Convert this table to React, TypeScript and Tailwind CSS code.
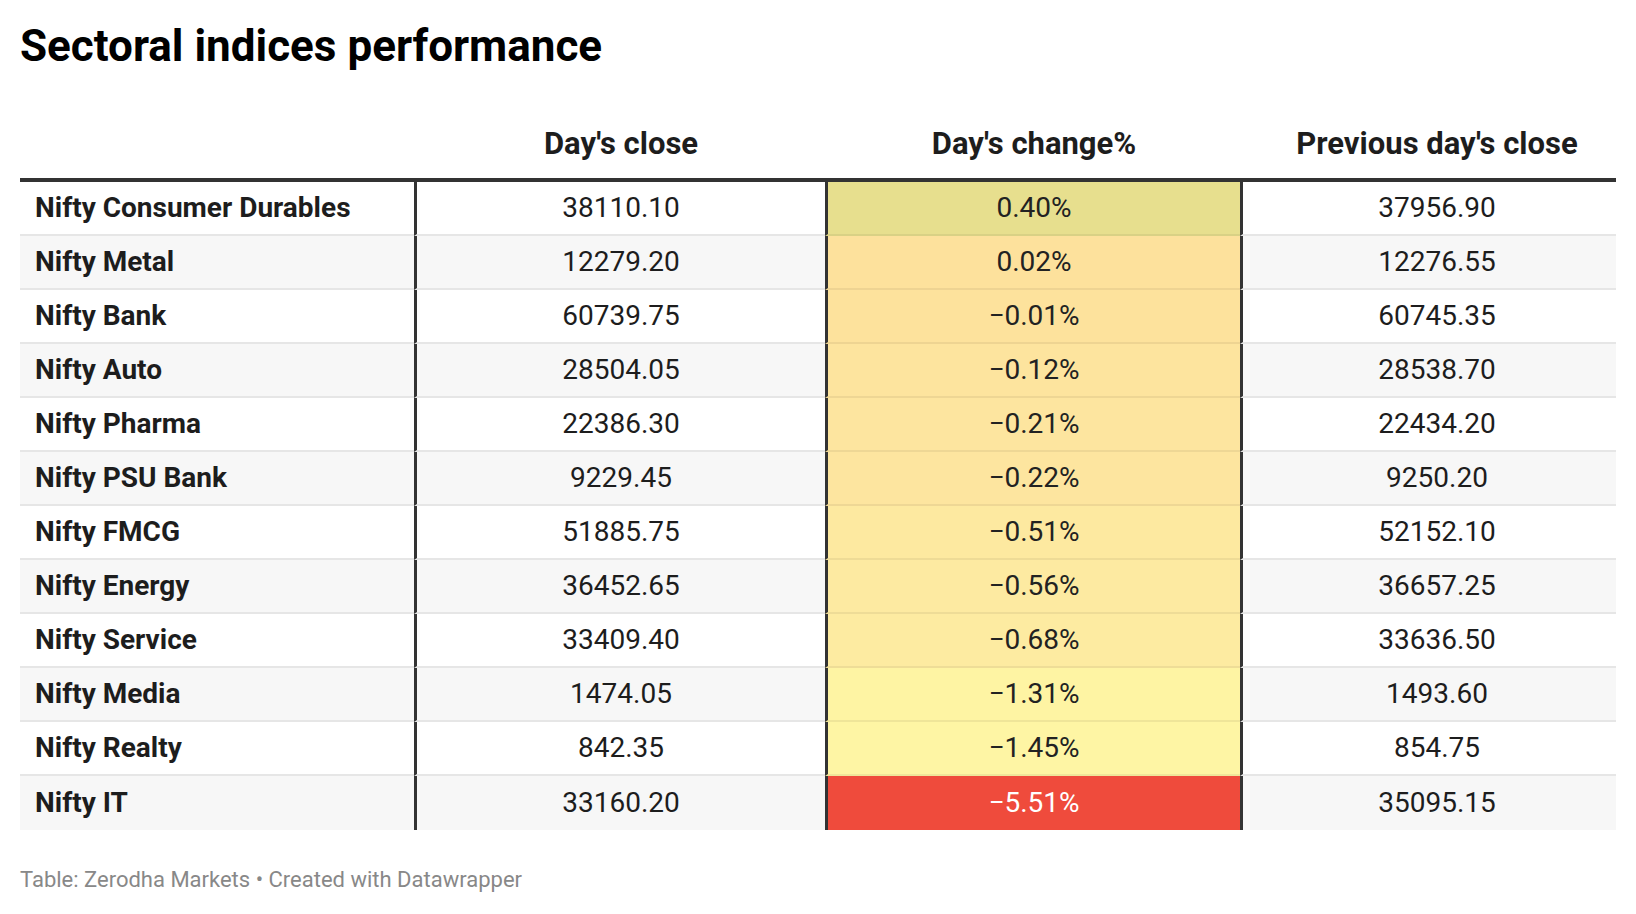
import React from 'react';

type Row = { name: string; close: string; change: string; prev: string; bg: string; light?: boolean };

const rows: Row[] = [
  { name: 'Nifty Consumer Durables', close: '38110.10', change: '0.40%', prev: '37956.90', bg: 'bg-[#e7df8e]' },
  { name: 'Nifty Metal', close: '12279.20', change: '0.02%', prev: '12276.55', bg: 'bg-[#fde19c]' },
  { name: 'Nifty Bank', close: '60739.75', change: '−0.01%', prev: '60745.35', bg: 'bg-[#fde29c]' },
  { name: 'Nifty Auto', close: '28504.05', change: '−0.12%', prev: '28538.70', bg: 'bg-[#fde49e]' },
  { name: 'Nifty Pharma', close: '22386.30', change: '−0.21%', prev: '22434.20', bg: 'bg-[#fde59f]' },
  { name: 'Nifty PSU Bank', close: '9229.45', change: '−0.22%', prev: '9250.20', bg: 'bg-[#fde59f]' },
  { name: 'Nifty FMCG', close: '51885.75', change: '−0.51%', prev: '52152.10', bg: 'bg-[#fde9a0]' },
  { name: 'Nifty Energy', close: '36452.65', change: '−0.56%', prev: '36657.25', bg: 'bg-[#fdeaa1]' },
  { name: 'Nifty Service', close: '33409.40', change: '−0.68%', prev: '33636.50', bg: 'bg-[#fdeba1]' },
  { name: 'Nifty Media', close: '1474.05', change: '−1.31%', prev: '1493.60', bg: 'bg-[#fef4a3]' },
  { name: 'Nifty Realty', close: '842.35', change: '−1.45%', prev: '854.75', bg: 'bg-[#fef5a4]' },
  { name: 'Nifty IT', close: '33160.20', change: '−5.51%', prev: '35095.15', bg: 'bg-[#ef4b3c]', light: true },
];

export default function App() {
  return (
    <div className="h-[914px] w-[1636px] bg-white px-[20px] font-['Roboto',sans-serif] text-[#1d1d1d]">
      <h1 className="pt-[20px] text-[44px] font-bold leading-[52px] text-black">Sectoral indices performance</h1>

      <div className="mt-[54px] flex border-b-4 border-[#333] pb-[16px] text-[31px] font-bold leading-[36px] text-[#1d1d1d]">
        <div className="w-[394px]" />
        <div className="w-[411px] pl-[3px] text-center">Day's close</div>
        <div className="w-[415px] pl-[3px] text-center">Day's change%</div>
        <div className="w-[376px] pl-[18px] text-center">Previous day's close</div>
      </div>

      <div className="flex flex-col">
        {rows.map((r, i) => {
          const last = i === rows.length - 1;
          const stripe = i % 2 === 1 ? 'bg-[#f7f7f7]' : 'bg-white';
          const sep = last ? '' : 'border-b-2';
          return (
            <div key={r.name} className={`flex h-[54px] text-[28px] leading-[32px] ${stripe}`}>
              <div className={`flex w-[394px] items-center pl-[15px] font-bold ${sep} border-[#e6e6e6]`}>{r.name}</div>
              <div className={`flex w-[411px] items-center justify-center border-l-[3px] border-l-[#333] ${sep} border-b-[#e6e6e6]`}>
                {r.close}
              </div>
              <div
                className={`flex w-[415px] items-center justify-center border-l-[3px] border-l-[#333] ${sep} border-b-black/[0.06] ${r.bg} ${r.light ? 'text-white' : 'text-[#222]'}`}
              >
                {r.change}
              </div>
              <div className={`flex w-[376px] items-center justify-center border-l-[3px] border-l-[#333] pl-[15px] ${sep} border-b-[#e6e6e6]`}>
                {r.prev}
              </div>
            </div>
          );
        })}
      </div>

      <p className="mt-[37px] text-[22px] leading-[26px] text-[#888]">Table: Zerodha Markets • Created with Datawrapper</p>
    </div>
  );
}
